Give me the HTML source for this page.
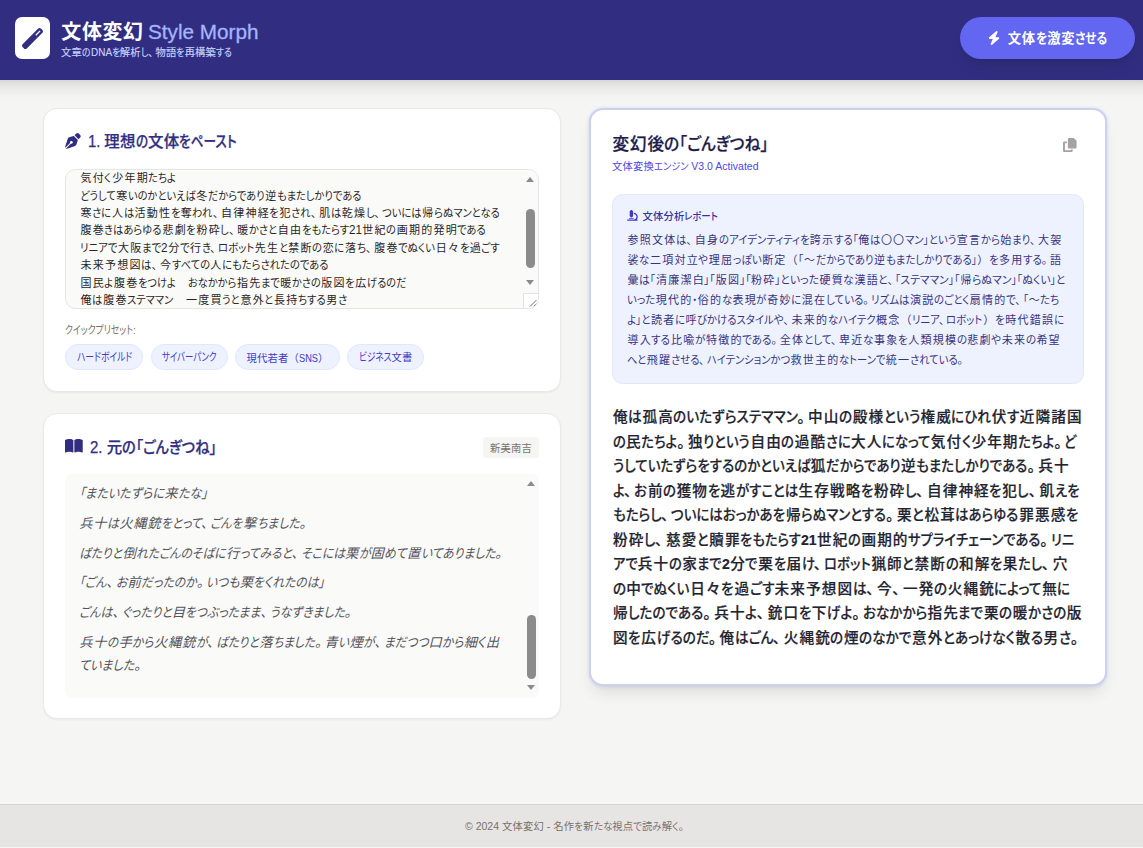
<!DOCTYPE html>
<html lang="ja"><head><meta charset="utf-8"><title>文体変幻 Style Morph</title>
<style>
*{box-sizing:border-box;margin:0;padding:0}
html,body{width:1143px;height:848px;overflow:hidden}
body{position:relative;background:#f5f5f4;font-family:"Liberation Sans","Noto Sans CJK JP",sans-serif;-webkit-font-smoothing:antialiased}
.ln{position:absolute;white-space:nowrap}
.k,.l{display:inline-block;white-space:pre}
.k0,.l0{white-space:pre}
.k>span,.l>span{display:inline-block;transform-origin:0 50%}
.k,.k0,.p,.p0{font-feature-settings:"palt"}
.p,.p0{margin-right:0.2em}

.title{font-size:19.982px;font-weight:700;color:#ffffff;line-height:28px;height:28px;}
.title .j,.title .j0{letter-spacing:0.618px;position:relative;left:0.309px}
.title .l,.title .l0{font-size:20.60px;font-weight:700}
.title2{font-size:18.900px;font-weight:400;color:#a5b4fc;line-height:28px;height:28px;-webkit-text-stroke:0.3px currentColor;}
.title2 .j,.title2 .j0{letter-spacing:2.100px;position:relative;left:1.050px}
.title2 .l,.title2 .l0{font-size:21.00px}
.sub{font-size:10.290px;font-weight:400;color:#c7d2fe;line-height:14px;height:14px;-webkit-text-stroke:0.15px currentColor;}
.sub .j,.sub .j0{letter-spacing:0.210px;position:relative;left:0.105px}
.sub .l,.sub .l0{font-size:10.50px}
.btn{font-size:13.300px;font-weight:700;color:#ffffff;line-height:21px;height:21px;}
.btn .j,.btn .j0{letter-spacing:0.700px;position:relative;left:0.350px}
.btn .l,.btn .l0{font-size:14.00px;font-weight:700}
.h2{font-size:15.435px;font-weight:500;color:#312e81;line-height:24.5px;height:24.5px;-webkit-text-stroke:0.25px currentColor;}
.h2 .j,.h2 .j0{letter-spacing:0.315px;position:relative;left:0.158px}
.h2 .l,.h2 .l0{font-size:15.75px;font-weight:400}
.ta{font-size:11.025px;font-weight:400;color:#292524;line-height:17.43px;height:17.43px;}
.ta .j,.ta .j0{letter-spacing:1.225px;position:relative;left:0.612px}
.ta .l,.ta .l0{font-size:12.25px}
.lab{font-size:10.290px;font-weight:400;color:#78716c;line-height:14px;height:14px;}
.lab .j,.lab .j0{letter-spacing:0.210px;position:relative;left:0.105px}
.lab .l,.lab .l0{font-size:10.50px}
.chip{font-size:10.290px;font-weight:400;color:#4338ca;line-height:14px;height:14px;}
.chip .j,.chip .j0{letter-spacing:0.210px;position:relative;left:0.105px}
.chip .l,.chip .l0{font-size:10.50px}
.badge{font-size:10.290px;font-weight:400;color:#78716c;line-height:14px;height:14px;}
.badge .j,.badge .j0{letter-spacing:0.210px;position:relative;left:0.105px}
.badge .l,.badge .l0{font-size:10.50px}
.it{font-size:13.300px;font-weight:400;color:#54525a;line-height:22.75px;height:22.75px;font-style:italic;}
.it .j,.it .j0{letter-spacing:0.700px;position:relative;left:0.350px}
.it .l,.it .l0{font-size:14.00px}
.h1r{font-size:16.625px;font-weight:500;color:#1e1b4b;line-height:24.5px;height:24.5px;-webkit-text-stroke:0.25px currentColor;}
.h1r .j,.h1r .j0{letter-spacing:0.875px;position:relative;left:0.438px}
.h1r .l,.h1r .l0{font-size:17.50px;font-weight:700}
.subr{font-size:10.290px;font-weight:400;color:#4f46e5;line-height:14px;height:14px;}
.subr .j,.subr .j0{letter-spacing:0.210px;position:relative;left:0.105px}
.subr .l,.subr .l0{font-size:10.50px}
.rt{font-size:10.290px;font-weight:500;color:#3730a3;line-height:14px;height:14px;}
.rt .j,.rt .j0{letter-spacing:0.210px;position:relative;left:0.105px}
.rt .l,.rt .l0{font-size:10.50px;font-weight:700}
.an{font-size:11.025px;font-weight:400;color:#37347f;line-height:19.9px;height:19.9px;}
.an .j,.an .j0{letter-spacing:1.225px;position:relative;left:0.612px}
.an .l,.an .l0{font-size:12.25px}
.res{font-size:14.648px;font-weight:500;color:#1f2430;line-height:24.5px;height:24.5px;-webkit-text-stroke:0.2px currentColor;}
.res .j,.res .j0{letter-spacing:1.102px;position:relative;left:0.551px}
.res .l,.res .l0{font-size:14.80px;font-weight:700}
.ft{font-size:10.290px;font-weight:400;color:#78716c;line-height:14px;height:14px;}
.ft .j,.ft .j0{letter-spacing:0.210px;position:relative;left:0.105px}
.ft .l,.ft .l0{font-size:10.50px}
.hdr{position:absolute;left:-20px;top:0;width:1183px;height:80px;background:#312e81;box-shadow:0 10px 15px -3px rgba(0,0,0,.1),0 4px 6px -4px rgba(0,0,0,.1)}
.logo{position:absolute;left:15px;top:17px;width:35px;height:42px;background:#fff;border-radius:7px}
.logo svg{position:absolute;left:7px;top:10.5px;width:21px;height:21px}
.cta{position:absolute;left:960px;top:17px;width:175px;height:42px;border-radius:21px;background:#6366f1;box-shadow:0 10px 15px -3px rgba(0,0,0,.1),0 4px 6px -4px rgba(0,0,0,.1)}
.cta svg{position:absolute;left:28px;top:14px;width:12.25px;height:14px}
.card{position:absolute;background:#fff;border:1px solid #ebe9e8;border-radius:14px;box-shadow:0 1px 2px 0 rgba(0,0,0,.05)}
#c1{left:43px;top:108px;width:518px;height:284px}
#c2{left:43px;top:413px;width:518px;height:306px}
#c3{left:589px;top:108px;width:518px;height:578px;border:2px solid #ccd2ee;box-shadow:0 0 3px rgba(165,180,252,.45),0 10px 15px -3px rgba(0,0,0,.09),0 4px 6px -4px rgba(0,0,0,.09)}
.ico{position:absolute}
.tarea{position:absolute;left:65px;top:169px;width:474px;height:140px;background:#fafaf9;border:1px solid #e7e5e4;border-radius:10.5px;overflow:hidden}
.sbar{position:absolute;right:0;top:0;width:15px;height:100%;background:#fafafa}
.sbar i{position:absolute;left:3px;width:0;height:0;border-left:4.5px solid transparent;border-right:4.5px solid transparent}
.sbar i.up{border-bottom:5px solid #8b8b8b}
.sbar i.dn{border-top:5px solid #8b8b8b}
.sbar b{position:absolute;left:3px;width:9px;border-radius:4.5px;background:#8b8b8b}
.chipb{position:absolute;top:344px;height:26px;border-radius:13px;background:#eef2ff;border:1px solid #e0e7ff}
.badgeb{position:absolute;left:483px;top:437px;width:56px;height:21px;border-radius:3.5px;background:#f5f5f4}
.orig{position:absolute;left:65px;top:474px;width:474px;height:224px;background:#fafaf9;border-radius:7px;overflow:hidden}
.abox{position:absolute;left:612px;top:194px;width:472px;height:190px;background:#eef2ff;border:1px solid #e0e7ff;border-radius:10.5px}
.ftr{position:absolute;left:0;top:804px;width:1143px;height:43px;background:#e7e5e4;border-top:1px solid #d6d3d1}
.rsz{position:absolute;right:0;bottom:0;width:15px;height:15px}

</style></head><body>
<header>
<div class="hdr"></div>
<div class="logo"><svg viewBox="0 0 512 512"><path fill="#312e81" d="M14.1 463.3c-18.7-18.7-18.7-49.1 0-67.900L395.400 14.100c18.700-18.700 49.100-18.700 67.900 0l34.600 34.600c18.700 18.700 18.700 49.100 0 67.900L116.500 497.900c-18.700 18.700-49.100 18.700-67.900 0L14.100 463.300zM347.600 187.600l105.400-105.400L429.700 59 324.300 164.400l23.300 23.200z"/></svg></div>
<div class="cta"><svg viewBox="0 0 448 512"><path fill="#fff" d="M349.400 44.600c5.900-13.700 1.500-29.700-10.600-38.500s-28.600-8-39.900 1.800l-256 224c-10 8.800-13.600 22.900-8.900 35.300S50.700 288 64 288l111.500 0L98.600 467.400c-5.900 13.700-1.500 29.700 10.600 38.500s28.600 8 39.900-1.800l256-224c10-8.800 13.600-22.900 8.900-35.300s-16.600-20.700-30-20.700l-111.500 0L349.400 44.600z"/></svg></div>
<div class="ln title" style="left:61px;top:18.20px;"><span class="j">文体変幻</span></div>
<div class="ln title2" style="left:147.8px;top:18.30px;"><span class="l" style="width:110.50px"><span style="transform:scaleX(0.9862)">Style Morph</span></span></div>
<div class="ln sub" style="left:61px;top:45.30px;"><span class="j">文章</span><span class="k" style="width:8.54px"><span style="transform:scaleX(0.8606)">の</span></span><span class="l" style="width:21.06px"><span style="transform:scaleX(0.9500)">DNA</span></span><span class="k" style="width:8.18px"><span style="transform:scaleX(0.8606)">を</span></span><span class="j">解析</span><span class="k" style="width:7.48px"><span style="transform:scaleX(0.8606)">し</span></span><span class="p">、</span><span class="j">物語</span><span class="k" style="width:8.18px"><span style="transform:scaleX(0.8606)">を</span></span><span class="j">再構築</span><span class="k" style="width:15.93px"><span style="transform:scaleX(0.8606)">する</span></span></div>
<div class="ln btn" style="left:1007.5px;top:28.00px;"><span class="j">文体</span><span class="k" style="width:11.31px"><span style="transform:scaleX(0.8858)">を</span></span><span class="j">激変</span><span class="k" style="width:32.19px"><span style="transform:scaleX(0.8858)">させる</span></span></div>
</header>
<main>
<section id="style-input">
<div class="card" id="c1"></div>
<svg class="ico" style="left:65px;top:133.2px;width:15.75px;height:15.75px" viewBox="0 0 512 512"><path fill="#312e81" d="M368.4 18.3L312.700 74.100 437.900 199.300l55.700-55.700c21.900-21.900 21.900-57.300 0-79.200L447.600 18.300c-21.900-21.900-57.300-21.900-79.200 0zM288 94.600l-9.200 2.800L134.700 140.600c-19.900 6-35.700 21.200-42.300 41L3.800 445.800c-3.800 11.300-1 23.900 7.300 32.400L164.700 324.700c-3-6.300-4.700-13.300-4.700-20.700c0-26.500 21.500-48 48-48s48 21.500 48 48s-21.500 48-48 48c-7.400 0-14.400-1.700-20.700-4.700L33.700 500.900c8.600 8.300 21.100 11.200 32.400 7.300l264.300-88.600c19.700-6.600 35-22.400 41-42.300l43.200-144.100 2.800-9.200L288 94.600z"/></svg>
<div class="tarea"><div class="sbar"><i class="up" style="top:7px"></i><b style="top:38.5px;height:59.5px"></b><i class="dn" style="top:110px"></i></div><svg class="rsz" viewBox="0 0 15 15"><rect x="0" y="0" width="15" height="15" fill="#fff"/><path d="M0.5 15V0.5H15" fill="none" stroke="#e0e0e0" stroke-width="1"/><path d="M7 13.5L13.5 7M10.5 13.5L13.5 10.5" stroke="#6b6b6b" stroke-width="1" fill="none"/></svg></div>
<div class="chipb" style="left:65px;width:78px"></div>
<div class="chipb" style="left:150.5px;width:77.5px"></div>
<div class="chipb" style="left:235px;width:105px"></div>
<div class="chipb" style="left:347px;width:77px"></div>
<div class="ln h2" style="left:87.5px;top:130.35px;"><span class="l" style="width:16.64px"><span style="transform:scaleX(0.9500)">1. </span></span><span class="j">理想</span><span class="k" style="width:12.24px"><span style="transform:scaleX(0.8226)">の</span></span><span class="j">文体</span><span class="k" style="width:57.66px"><span style="transform:scaleX(0.8226)">をペースト</span></span></div>
<div class="ln ta" style="left:80px;top:170.09px;"><span class="j">気付</span><span class="k" style="width:7.08px"><span style="transform:scaleX(0.9348)">く</span></span><span class="j">少年期</span><span class="k" style="width:27.90px"><span style="transform:scaleX(0.9348)">たちよ</span></span></div>
<div class="ln ta" style="left:80px;top:187.52px;"><span class="k" style="width:35.75px"><span style="transform:scaleX(0.9289)">どうして</span></span><span class="j">寒</span><span class="k" style="width:67.66px"><span style="transform:scaleX(0.9289)">いのかといえば</span></span><span class="j">冬</span><span class="k" style="width:56.65px"><span style="transform:scaleX(0.9289)">だからであり</span></span><span class="j">逆</span><span class="k" style="width:84.40px"><span style="transform:scaleX(0.9289)">もまたしかりである</span></span></div>
<div class="ln ta" style="left:80px;top:204.95px;"><span class="j">寒</span><span class="k" style="width:19.13px"><span style="transform:scaleX(0.9362)">さに</span></span><span class="j">人</span><span class="k" style="width:10.33px"><span style="transform:scaleX(0.9362)">は</span></span><span class="j">活動性</span><span class="k" style="width:9.52px"><span style="transform:scaleX(0.9362)">を</span></span><span class="j">奪</span><span class="k" style="width:20.30px"><span style="transform:scaleX(0.9362)">われ</span></span><span class="p">、</span><span class="j">自律神経</span><span class="k" style="width:9.52px"><span style="transform:scaleX(0.9362)">を</span></span><span class="j">犯</span><span class="k" style="width:19.62px"><span style="transform:scaleX(0.9362)">され</span></span><span class="p">、</span><span class="j">肌</span><span class="k" style="width:10.33px"><span style="transform:scaleX(0.9362)">は</span></span><span class="j">乾燥</span><span class="k" style="width:8.72px"><span style="transform:scaleX(0.9362)">し</span></span><span class="p">、</span><span class="k" style="width:39.67px"><span style="transform:scaleX(0.9362)">ついには</span></span><span class="j">帰</span><span class="k" style="width:65.80px"><span style="transform:scaleX(0.9362)">らぬマンとなる</span></span></div>
<div class="ln ta" style="left:80px;top:222.38px;"><span class="j">腹巻</span><span class="k" style="width:57.36px"><span style="transform:scaleX(0.9344)">きはあらゆる</span></span><span class="j">悲劇</span><span class="k" style="width:9.50px"><span style="transform:scaleX(0.9344)">を</span></span><span class="j">粉砕</span><span class="k" style="width:8.70px"><span style="transform:scaleX(0.9344)">し</span></span><span class="p">、</span><span class="j">暖</span><span class="k" style="width:28.21px"><span style="transform:scaleX(0.9344)">かさと</span></span><span class="j">自由</span><span class="k" style="width:47.10px"><span style="transform:scaleX(0.9344)">をもたらす</span></span><span class="l" style="width:12.96px"><span style="transform:scaleX(0.9500)">21</span></span><span class="j">世紀</span><span class="k" style="width:9.93px"><span style="transform:scaleX(0.9344)">の</span></span><span class="j">画期的発明</span><span class="k" style="width:28.63px"><span style="transform:scaleX(0.9344)">である</span></span></div>
<div class="ln ta" style="left:80px;top:239.81px;"><span class="k" style="width:37.40px"><span style="transform:scaleX(0.9439)">リニアで</span></span><span class="j">大阪</span><span class="k" style="width:19.20px"><span style="transform:scaleX(0.9439)">まで</span></span><span class="l" style="width:6.49px"><span style="transform:scaleX(0.9500)">2</span></span><span class="j">分</span><span class="k" style="width:9.62px"><span style="transform:scaleX(0.9439)">で</span></span><span class="j">行</span><span class="k" style="width:8.36px"><span style="transform:scaleX(0.9439)">き</span></span><span class="p">、</span><span class="k" style="width:36.37px"><span style="transform:scaleX(0.9439)">ロボット</span></span><span class="j">先生</span><span class="k" style="width:9.17px"><span style="transform:scaleX(0.9439)">と</span></span><span class="j">禁断</span><span class="k" style="width:10.03px"><span style="transform:scaleX(0.9439)">の</span></span><span class="j">恋</span><span class="k" style="width:10.01px"><span style="transform:scaleX(0.9439)">に</span></span><span class="j">落</span><span class="k" style="width:9.17px"><span style="transform:scaleX(0.9439)">ち</span></span><span class="p">、</span><span class="j">腹巻</span><span class="k" style="width:36.97px"><span style="transform:scaleX(0.9439)">でぬくい</span></span><span class="j">日々</span><span class="k" style="width:9.60px"><span style="transform:scaleX(0.9439)">を</span></span><span class="j">過</span><span class="k" style="width:18.69px"><span style="transform:scaleX(0.9439)">ごす</span></span></div>
<div class="ln ta" style="left:80px;top:257.24px;"><span class="j">未来予想図</span><span class="k" style="width:10.34px"><span style="transform:scaleX(0.9370)">は</span></span><span class="p">、</span><span class="j">今</span><span class="k" style="width:38.18px"><span style="transform:scaleX(0.9370)">すべての</span></span><span class="j">人</span><span class="k" style="width:106.54px"><span style="transform:scaleX(0.9370)">にもたらされたのである</span></span></div>
<div class="ln ta" style="left:80px;top:274.67px;"><span class="j">国民</span><span class="k" style="width:8.91px"><span style="transform:scaleX(0.9256)">よ</span></span><span class="j">腹巻</span><span class="k" style="width:37.85px"><span style="transform:scaleX(0.9256)">をつけよ</span></span><span class="j">　</span><span class="k" style="width:48.38px"><span style="transform:scaleX(0.9256)">おなかから</span></span><span class="j">指先</span><span class="k" style="width:18.83px"><span style="transform:scaleX(0.9256)">まで</span></span><span class="j">暖</span><span class="k" style="width:28.79px"><span style="transform:scaleX(0.9256)">かさの</span></span><span class="j">版図</span><span class="k" style="width:9.42px"><span style="transform:scaleX(0.9256)">を</span></span><span class="j">広</span><span class="k" style="width:39.44px"><span style="transform:scaleX(0.9256)">げるのだ</span></span></div>
<div class="ln ta" style="left:80px;top:292.10px;"><span class="j">俺</span><span class="k" style="width:10.32px"><span style="transform:scaleX(0.9351)">は</span></span><span class="j">腹巻</span><span class="k" style="width:46.20px"><span style="transform:scaleX(0.9351)">ステママン</span></span><span class="j">　一度買</span><span class="k" style="width:17.64px"><span style="transform:scaleX(0.9351)">うと</span></span><span class="j">意外</span><span class="k" style="width:9.09px"><span style="transform:scaleX(0.9351)">と</span></span><span class="j">長持</span><span class="k" style="width:27.65px"><span style="transform:scaleX(0.9351)">ちする</span></span><span class="j">男</span><span class="k" style="width:9.19px"><span style="transform:scaleX(0.9351)">さ</span></span></div>
<div class="ln lab" style="left:65px;top:323.20px;"><span class="k" style="width:68.02px"><span style="transform:scale(0.8580,1.12)">クイックプリセット</span></span><span class="l" style="width:2.78px"><span style="transform:scaleX(0.9500)">:</span></span></div>
<div class="ln chip" style="left:76.5px;top:350.60px;"><span class="k" style="width:55.30px"><span style="transform:scale(0.8522,1.12)">ハードボイルド</span></span></div>
<div class="ln chip" style="left:162px;top:350.60px;"><span class="k" style="width:54.50px"><span style="transform:scale(0.8151,1.12)">サイバーパンク</span></span></div>
<div class="ln chip" style="left:246.5px;top:350.60px;"><span class="j">現代若者（</span><span class="l" style="width:19.03px"><span style="transform:scaleX(0.8813)">SNS</span></span><span class="j">）</span></div>
<div class="ln chip" style="left:359px;top:350.60px;"><span class="k" style="width:32.52px"><span style="transform:scale(0.8425,1.12)">ビジネス</span></span><span class="j">文書</span></div>
</section>
<section id="source-text">
<div class="card" id="c2"></div>
<svg class="ico" style="left:65px;top:438px;width:17.72px;height:15.75px" viewBox="0 0 576 512"><path fill="#312e81" d="M249.600 471.500c10.800 3.800 22.400-4.100 22.400-15.500l0-377.400c0-4.200-1.600-8.400-5-11C247.400 52 202.400 32 144 32C93.500 32 46.300 45.300 18.100 56.100C6.800 60.500 0 71.700 0 83.800L0 454.100c0 11.900 12.800 20.200 24.100 16.500C55.600 460.100 105.500 448 144 448c33.900 0 79 14 105.600 23.500zm76.800 0C353 462 398.100 448 432 448c38.500 0 88.400 12.100 119.900 22.600c11.300 3.800 24.100-4.600 24.100-16.500l0-370.300c0-12.100-6.800-23.300-18.100-27.600C529.700 45.300 482.500 32 432 32c-58.400 0-103.400 20-123 35.600c-3.300 2.600-5 6.800-5 11L304 456c0 11.400 11.700 19.300 22.400 15.500z"/></svg>
<div class="badgeb"></div>
<div class="orig"><div class="sbar"><i class="up" style="top:7px"></i><b style="top:140.6px;height:64.3px"></b><i class="dn" style="top:211px"></i></div></div>
<div class="ln h2" style="left:90px;top:436.15px;"><span class="l" style="width:16.64px"><span style="transform:scaleX(0.9500)">2. </span></span><span class="j">元</span><span class="k" style="width:94.61px"><span style="transform:scaleX(0.9264)">の「ごんぎつね」</span></span></div>
<div class="ln badge" style="left:490px;top:441.60px;"><span class="j">新美南吉</span></div>
<div class="ln it" style="left:79px;top:483.12px;"><span class="k" style="width:85.03px"><span style="transform:scaleX(0.9100)">「またいたずらに</span></span><span class="j">来</span><span class="k" style="width:29.47px"><span style="transform:scaleX(0.9100)">たな」</span></span></div>
<div class="ln it" style="left:79px;top:512.83px;"><span class="j">兵十</span><span class="k" style="width:11.84px"><span style="transform:scaleX(0.8905)">は</span></span><span class="j">火縄銃</span><span class="k" style="width:40.15px"><span style="transform:scaleX(0.8905)">をとって</span></span><span class="p">、</span><span class="k" style="width:32.42px"><span style="transform:scaleX(0.8905)">ごんを</span></span><span class="j">撃</span><span class="k" style="width:42.67px"><span style="transform:scaleX(0.8905)">ちました</span></span><span class="p">。</span></div>
<div class="ln it" style="left:79px;top:542.62px;"><span class="k" style="width:43.24px"><span style="transform:scaleX(0.8853)">ばたりと</span></span><span class="j">倒</span><span class="k" style="width:89.54px"><span style="transform:scaleX(0.8853)">れたごんのそばに</span></span><span class="j">行</span><span class="k" style="width:51.58px"><span style="transform:scaleX(0.8853)">ってみると</span></span><span class="p">、</span><span class="k" style="width:43.93px"><span style="transform:scaleX(0.8853)">そこには</span></span><span class="j">栗</span><span class="k" style="width:11.54px"><span style="transform:scaleX(0.8853)">が</span></span><span class="j">固</span><span class="k" style="width:22.56px"><span style="transform:scaleX(0.8853)">めて</span></span><span class="j">置</span><span class="k" style="width:74.49px"><span style="transform:scaleX(0.8853)">いてありました</span></span><span class="p">。</span></div>
<div class="ln it" style="left:79px;top:572.43px;"><span class="k" style="width:27.45px"><span style="transform:scaleX(0.8919)">「ごん</span></span><span class="p">、</span><span class="k" style="width:11.39px"><span style="transform:scaleX(0.8919)">お</span></span><span class="j">前</span><span class="k" style="width:55.47px"><span style="transform:scaleX(0.8919)">だったのか</span></span><span class="p">。</span><span class="k" style="width:33.56px"><span style="transform:scaleX(0.8919)">いつも</span></span><span class="j">栗</span><span class="k" style="width:71.51px"><span style="transform:scaleX(0.8919)">をくれたのは」</span></span></div>
<div class="ln it" style="left:79px;top:602.23px;"><span class="k" style="width:33.25px"><span style="transform:scaleX(0.8882)">ごんは</span></span><span class="p">、</span><span class="k" style="width:49.85px"><span style="transform:scaleX(0.8882)">ぐったりと</span></span><span class="j">目</span><span class="k" style="width:74.90px"><span style="transform:scaleX(0.8882)">をつぶったまま</span></span><span class="p">、</span><span class="k" style="width:74.77px"><span style="transform:scaleX(0.8882)">うなずきました</span></span><span class="p">。</span></div>
<div class="ln it" style="left:79px;top:632.03px;"><span class="j">兵十</span><span class="k" style="width:11.24px"><span style="transform:scaleX(0.8760)">の</span></span><span class="j">手</span><span class="k" style="width:21.38px"><span style="transform:scaleX(0.8760)">から</span></span><span class="j">火縄銃</span><span class="k" style="width:11.18px"><span style="transform:scaleX(0.8760)">が</span></span><span class="p">、</span><span class="k" style="width:42.79px"><span style="transform:scaleX(0.8760)">ばたりと</span></span><span class="j">落</span><span class="k" style="width:41.98px"><span style="transform:scaleX(0.8760)">ちました</span></span><span class="p">。</span><span class="j">青</span><span class="k" style="width:11.00px"><span style="transform:scaleX(0.8760)">い</span></span><span class="j">煙</span><span class="k" style="width:11.18px"><span style="transform:scaleX(0.8760)">が</span></span><span class="p">、</span><span class="k" style="width:44.41px"><span style="transform:scaleX(0.8760)">まだつつ</span></span><span class="j">口</span><span class="k" style="width:21.38px"><span style="transform:scaleX(0.8760)">から</span></span><span class="j">細</span><span class="k" style="width:8.01px"><span style="transform:scaleX(0.8760)">く</span></span><span class="j">出</span></div>
<div class="ln it" style="left:79px;top:654.83px;"><span class="k" style="width:55.20px"><span style="transform:scaleX(0.9054)">ていました</span></span><span class="p">。</span></div>
</section>
<section id="result">
<div class="card" id="c3"></div>
<svg class="ico" style="left:1063px;top:138px;width:13.6px;height:14px" viewBox="0 0 448 512" preserveAspectRatio="none"><path fill="#a8a29e" d="M208 0L332.100 0c12.700 0 24.900 5.100 33.900 14.100l67.900 67.900c9 9 14.100 21.200 14.100 33.900L448 336c0 26.500-21.500 48-48 48l-192 0c-26.500 0-48-21.500-48-48l0-288c0-26.500 21.500-48 48-48zM48 128l80 0 0 64-64 0 0 256 192 0 0-32 64 0 0 48c0 26.500-21.500 48-48 48L48 512c-26.500 0-48-21.500-48-48L0 176c0-26.500 21.500-48 48-48z"/></svg>
<div class="abox"></div>
<svg class="ico" style="left:627.3px;top:210.2px;width:10.8px;height:10.8px" viewBox="0 0 512 512"><path fill="#4338ca" d="M160 32c0-17.700 14.300-32 32-32l32 0c17.700 0 32 14.300 32 32c17.700 0 32 14.300 32 32l0 224c0 17.700-14.300 32-32 32c0 17.700-14.300 32-32 32l-32 0c-17.700 0-32-14.300-32-32c-17.700 0-32-14.300-32-32l0-224c0-17.700 14.300-32 32-32zM32 448l288 0c70.700 0 128-57.300 128-128s-57.300-128-128-128l0-64c106 0 192 86 192 192c0 49.200-18.500 94-48.900 128l16.900 0c17.700 0 32 14.300 32 32s-14.300 32-32 32l-160 0L32 512c-17.700 0-32-14.300-32-32s14.300-32 32-32zm80-64l192 0c8.800 0 16 7.200 16 16s-7.200 16-16 16l-192 0c-8.800 0-16-7.200-16-16s7.200-16 16-16z"/></svg>
<div class="ln h1r" style="left:612px;top:132.85px;"><span class="j">変幻後</span><span class="k" style="width:104.33px"><span style="transform:scaleX(0.9486)">の「ごんぎつね」</span></span></div>
<div class="ln subr" style="left:612px;top:159.40px;"><span class="j">文体変換</span><span class="k" style="width:34.48px"><span style="transform:scaleX(0.9030)">エンジン</span></span><span class="l" style="width:70.05px"><span style="transform:scaleX(1.0000)"> V3.0 Activated</span></span></div>
<div class="ln rt" style="left:642.5px;top:210.20px;"><span class="j">文体分析</span><span class="k" style="width:34.03px"><span style="transform:scaleX(0.9194)">レポート</span></span></div>
<div class="ln an" style="left:627px;top:231.15px;"><span class="j">参照文体</span><span class="k" style="width:10.41px"><span style="transform:scaleX(0.9441)">は</span></span><span class="p">、</span><span class="j">自身</span><span class="k" style="width:90.61px"><span style="transform:scaleX(0.9441)">のアイデンティティを</span></span><span class="j">誇示</span><span class="k" style="width:23.94px"><span style="transform:scaleX(0.9441)">する「</span></span><span class="j">俺</span><span class="k" style="width:10.41px"><span style="transform:scaleX(0.9441)">は</span></span><span class="j">〇〇</span><span class="k" style="width:51.36px"><span style="transform:scaleX(0.9441)">マン」という</span></span><span class="j">宣言</span><span class="k" style="width:19.09px"><span style="transform:scaleX(0.9441)">から</span></span><span class="j">始</span><span class="k" style="width:17.83px"><span style="transform:scaleX(0.9441)">まり</span></span><span class="p">、</span><span class="j">大袈</span></div>
<div class="ln an" style="left:627px;top:251.05px;"><span class="j">裟</span><span class="k" style="width:10.22px"><span style="transform:scaleX(0.9442)">な</span></span><span class="j">二項対立</span><span class="k" style="width:9.77px"><span style="transform:scaleX(0.9442)">や</span></span><span class="j">理屈</span><span class="k" style="width:28.84px"><span style="transform:scaleX(0.9442)">っぽい</span></span><span class="j">断定（</span><span class="k" style="width:5.21px"><span style="transform:scaleX(0.9442)">「</span></span><span class="j">～</span><span class="k" style="width:57.58px"><span style="transform:scaleX(0.9442)">だからであり</span></span><span class="j">逆</span><span class="k" style="width:91.00px"><span style="transform:scaleX(0.9442)">もまたしかりである」</span></span><span class="j">）</span><span class="k" style="width:9.60px"><span style="transform:scaleX(0.9442)">を</span></span><span class="j">多用</span><span class="k" style="width:18.74px"><span style="transform:scaleX(0.9442)">する</span></span><span class="p">。</span><span class="j">語</span></div>
<div class="ln an" style="left:627px;top:270.95px;"><span class="j">彙</span><span class="k" style="width:16.19px"><span style="transform:scaleX(0.9791)">は「</span></span><span class="j">清廉潔白</span><span class="k" style="width:10.79px"><span style="transform:scaleX(0.9791)">」「</span></span><span class="j">版図</span><span class="k" style="width:10.79px"><span style="transform:scaleX(0.9791)">」「</span></span><span class="j">粉砕</span><span class="k" style="width:43.97px"><span style="transform:scaleX(0.9791)">」といった</span></span><span class="j">硬質</span><span class="k" style="width:10.60px"><span style="transform:scaleX(0.9791)">な</span></span><span class="j">漢語</span><span class="k" style="width:9.07px"><span style="transform:scaleX(0.9791)">と</span></span><span class="p">、</span><span class="k" style="width:64.54px"><span style="transform:scaleX(0.9791)">「ステママン」「</span></span><span class="j">帰</span><span class="k" style="width:93.43px"><span style="transform:scaleX(0.9791)">らぬマン」「ぬくい」と</span></span></div>
<div class="ln an" style="left:627px;top:290.85px;"><span class="k" style="width:28.19px"><span style="transform:scaleX(0.9494)">いった</span></span><span class="j">現代的</span><span class="k" style="width:5.24px"><span style="transform:scaleX(0.9494)">・</span></span><span class="j">俗的</span><span class="k" style="width:10.28px"><span style="transform:scaleX(0.9494)">な</span></span><span class="j">表現</span><span class="k" style="width:10.25px"><span style="transform:scaleX(0.9494)">が</span></span><span class="j">奇妙</span><span class="k" style="width:10.07px"><span style="transform:scaleX(0.9494)">に</span></span><span class="j">混在</span><span class="k" style="width:37.40px"><span style="transform:scaleX(0.9494)">している</span></span><span class="p">。</span><span class="k" style="width:38.51px"><span style="transform:scaleX(0.9494)">リズムは</span></span><span class="j">演説</span><span class="k" style="width:35.38px"><span style="transform:scaleX(0.9494)">のごとく</span></span><span class="j">扇情的</span><span class="k" style="width:9.26px"><span style="transform:scaleX(0.9494)">で</span></span><span class="p">、</span><span class="k" style="width:5.24px"><span style="transform:scaleX(0.9494)">「</span></span><span class="j">～</span><span class="k" style="width:19.21px"><span style="transform:scaleX(0.9494)">たち</span></span></div>
<div class="ln an" style="left:627px;top:310.75px;"><span class="k" style="width:23.39px"><span style="transform:scaleX(0.9419)">よ」と</span></span><span class="j">読者</span><span class="k" style="width:9.99px"><span style="transform:scaleX(0.9419)">に</span></span><span class="j">呼</span><span class="k" style="width:86.17px"><span style="transform:scaleX(0.9419)">びかけるスタイルや</span></span><span class="p">、</span><span class="j">未来的</span><span class="k" style="width:47.62px"><span style="transform:scaleX(0.9419)">なハイテク</span></span><span class="j">概念（</span><span class="k" style="width:26.70px"><span style="transform:scaleX(0.9419)">リニア</span></span><span class="p">、</span><span class="k" style="width:36.29px"><span style="transform:scaleX(0.9419)">ロボット</span></span><span class="j">）</span><span class="k" style="width:9.58px"><span style="transform:scaleX(0.9419)">を</span></span><span class="j">時代錯誤</span><span class="k" style="width:9.99px"><span style="transform:scaleX(0.9419)">に</span></span></div>
<div class="ln an" style="left:627px;top:330.65px;"><span class="j">導入</span><span class="k" style="width:19.03px"><span style="transform:scaleX(0.9588)">する</span></span><span class="j">比喩</span><span class="k" style="width:10.35px"><span style="transform:scaleX(0.9588)">が</span></span><span class="j">特徴的</span><span class="k" style="width:29.38px"><span style="transform:scaleX(0.9588)">である</span></span><span class="p">。</span><span class="j">全体</span><span class="k" style="width:27.10px"><span style="transform:scaleX(0.9588)">として</span></span><span class="p">、</span><span class="j">卑近</span><span class="k" style="width:10.38px"><span style="transform:scaleX(0.9588)">な</span></span><span class="j">事象</span><span class="k" style="width:9.75px"><span style="transform:scaleX(0.9588)">を</span></span><span class="j">人類規模</span><span class="k" style="width:10.19px"><span style="transform:scaleX(0.9588)">の</span></span><span class="j">悲劇</span><span class="k" style="width:9.92px"><span style="transform:scaleX(0.9588)">や</span></span><span class="j">未来</span><span class="k" style="width:10.19px"><span style="transform:scaleX(0.9588)">の</span></span><span class="j">希望</span></div>
<div class="ln an" style="left:627px;top:350.55px;"><span class="k" style="width:19.06px"><span style="transform:scaleX(0.9370)">へと</span></span><span class="j">飛躍</span><span class="k" style="width:28.39px"><span style="transform:scaleX(0.9370)">させる</span></span><span class="p">、</span><span class="k" style="width:83.21px"><span style="transform:scaleX(0.9370)">ハイテンションかつ</span></span><span class="j">救世主的</span><span class="k" style="width:46.44px"><span style="transform:scaleX(0.9370)">なトーンで</span></span><span class="j">統一</span><span class="k" style="width:47.72px"><span style="transform:scaleX(0.9370)">されている</span></span><span class="p">。</span></div>
<div class="ln res" style="left:612.5px;top:405.05px;"><span class="j">俺</span><span class="k" style="width:13.67px"><span style="transform:scaleX(0.9339)">は</span></span><span class="j">孤高</span><span class="k" style="width:123.97px"><span style="transform:scaleX(0.9339)">のいたずらステママン</span></span><span class="p">。</span><span class="j">中山</span><span class="k" style="width:13.18px"><span style="transform:scaleX(0.9339)">の</span></span><span class="j">殿様</span><span class="k" style="width:36.28px"><span style="transform:scaleX(0.9339)">という</span></span><span class="j">権威</span><span class="k" style="width:39.73px"><span style="transform:scaleX(0.9339)">にひれ</span></span><span class="j">伏</span><span class="k" style="width:12.36px"><span style="transform:scaleX(0.9339)">す</span></span><span class="j">近隣諸国</span></div>
<div class="ln res" style="left:612.5px;top:429.55px;"><span class="k" style="width:12.89px"><span style="transform:scaleX(0.9139)">の</span></span><span class="j">民</span><span class="k" style="width:36.21px"><span style="transform:scaleX(0.9139)">たちよ</span></span><span class="p">。</span><span class="j">独</span><span class="k" style="width:46.62px"><span style="transform:scaleX(0.9139)">りという</span></span><span class="j">自由</span><span class="k" style="width:12.89px"><span style="transform:scaleX(0.9139)">の</span></span><span class="j">過酷</span><span class="k" style="width:24.79px"><span style="transform:scaleX(0.9139)">さに</span></span><span class="j">大人</span><span class="k" style="width:48.28px"><span style="transform:scaleX(0.9139)">になって</span></span><span class="j">気付</span><span class="k" style="width:9.18px"><span style="transform:scaleX(0.9139)">く</span></span><span class="j">少年期</span><span class="k" style="width:36.21px"><span style="transform:scaleX(0.9139)">たちよ</span></span><span class="p">。</span><span class="k" style="width:12.39px"><span style="transform:scaleX(0.9139)">ど</span></span></div>
<div class="ln res" style="left:612.5px;top:454.05px;"><span class="k" style="width:197.58px"><span style="transform:scaleX(0.9224)">うしていたずらをするのかといえば</span></span><span class="j">狐</span><span class="k" style="width:74.67px"><span style="transform:scaleX(0.9224)">だからであり</span></span><span class="j">逆</span><span class="k" style="width:111.27px"><span style="transform:scaleX(0.9224)">もまたしかりである</span></span><span class="p">。</span><span class="j">兵十</span></div>
<div class="ln res" style="left:612.5px;top:478.55px;"><span class="k" style="width:11.76px"><span style="transform:scaleX(0.9200)">よ</span></span><span class="p">、</span><span class="k" style="width:12.91px"><span style="transform:scaleX(0.9200)">お</span></span><span class="j">前</span><span class="k" style="width:12.98px"><span style="transform:scaleX(0.9200)">の</span></span><span class="j">獲物</span><span class="k" style="width:12.42px"><span style="transform:scaleX(0.9200)">を</span></span><span class="j">逃</span><span class="k" style="width:62.30px"><span style="transform:scaleX(0.9200)">がすことは</span></span><span class="j">生存戦略</span><span class="k" style="width:12.42px"><span style="transform:scaleX(0.9200)">を</span></span><span class="j">粉砕</span><span class="k" style="width:11.37px"><span style="transform:scaleX(0.9200)">し</span></span><span class="p">、</span><span class="j">自律神経</span><span class="k" style="width:12.42px"><span style="transform:scaleX(0.9200)">を</span></span><span class="j">犯</span><span class="k" style="width:11.37px"><span style="transform:scaleX(0.9200)">し</span></span><span class="p">、</span><span class="j">飢</span><span class="k" style="width:24.60px"><span style="transform:scaleX(0.9200)">えを</span></span></div>
<div class="ln res" style="left:612.5px;top:503.05px;"><span class="k" style="width:48.69px"><span style="transform:scaleX(0.9217)">もたらし</span></span><span class="p">、</span><span class="k" style="width:114.09px"><span style="transform:scaleX(0.9217)">ついにはおっかあを</span></span><span class="j">帰</span><span class="k" style="width:84.95px"><span style="transform:scaleX(0.9217)">らぬマンとする</span></span><span class="p">。</span><span class="j">栗</span><span class="k" style="width:11.88px"><span style="transform:scaleX(0.9217)">と</span></span><span class="j">松茸</span><span class="k" style="width:63.34px"><span style="transform:scaleX(0.9217)">はあらゆる</span></span><span class="j">罪悪感</span><span class="k" style="width:12.44px"><span style="transform:scaleX(0.9217)">を</span></span></div>
<div class="ln res" style="left:612.5px;top:527.55px;"><span class="j">粉砕</span><span class="k" style="width:11.24px"><span style="transform:scaleX(0.9091)">し</span></span><span class="p">、</span><span class="j">慈愛</span><span class="k" style="width:11.72px"><span style="transform:scaleX(0.9091)">と</span></span><span class="j">贖罪</span><span class="k" style="width:60.83px"><span style="transform:scaleX(0.9091)">をもたらす</span></span><span class="l" style="width:15.65px"><span style="transform:scaleX(0.9500)">21</span></span><span class="j">世紀</span><span class="k" style="width:12.83px"><span style="transform:scaleX(0.9091)">の</span></span><span class="j">画期的</span><span class="k" style="width:132.23px"><span style="transform:scaleX(0.9091)">サプライチェーンである</span></span><span class="p">。</span><span class="k" style="width:23.17px"><span style="transform:scaleX(0.9091)">リニ</span></span></div>
<div class="ln res" style="left:612.5px;top:552.05px;"><span class="k" style="width:24.76px"><span style="transform:scaleX(0.9124)">アで</span></span><span class="j">兵十</span><span class="k" style="width:12.87px"><span style="transform:scaleX(0.9124)">の</span></span><span class="j">家</span><span class="k" style="width:24.64px"><span style="transform:scaleX(0.9124)">まで</span></span><span class="l" style="width:7.82px"><span style="transform:scaleX(0.9500)">2</span></span><span class="j">分</span><span class="k" style="width:12.33px"><span style="transform:scaleX(0.9124)">で</span></span><span class="j">栗</span><span class="k" style="width:12.32px"><span style="transform:scaleX(0.9124)">を</span></span><span class="j">届</span><span class="k" style="width:12.36px"><span style="transform:scaleX(0.9124)">け</span></span><span class="p">、</span><span class="k" style="width:46.66px"><span style="transform:scaleX(0.9124)">ロボット</span></span><span class="j">猟師</span><span class="k" style="width:11.76px"><span style="transform:scaleX(0.9124)">と</span></span><span class="j">禁断</span><span class="k" style="width:12.87px"><span style="transform:scaleX(0.9124)">の</span></span><span class="j">和解</span><span class="k" style="width:12.32px"><span style="transform:scaleX(0.9124)">を</span></span><span class="j">果</span><span class="k" style="width:24.01px"><span style="transform:scaleX(0.9124)">たし</span></span><span class="p">、</span><span class="j">穴</span></div>
<div class="ln res" style="left:612.5px;top:576.55px;"><span class="k" style="width:13.15px"><span style="transform:scaleX(0.9318)">の</span></span><span class="j">中</span><span class="k" style="width:48.45px"><span style="transform:scaleX(0.9318)">でぬくい</span></span><span class="j">日々</span><span class="k" style="width:12.58px"><span style="transform:scaleX(0.9318)">を</span></span><span class="j">過</span><span class="k" style="width:24.47px"><span style="transform:scaleX(0.9318)">ごす</span></span><span class="j">未来予想図</span><span class="k" style="width:13.64px"><span style="transform:scaleX(0.9318)">は</span></span><span class="p">、</span><span class="j">今</span><span class="p">、</span><span class="j">一発</span><span class="k" style="width:13.15px"><span style="transform:scaleX(0.9318)">の</span></span><span class="j">火縄銃</span><span class="k" style="width:47.33px"><span style="transform:scaleX(0.9318)">によって</span></span><span class="j">無</span><span class="k" style="width:13.13px"><span style="transform:scaleX(0.9318)">に</span></span></div>
<div class="ln res" style="left:612.5px;top:601.05px;"><span class="j">帰</span><span class="k" style="width:75.19px"><span style="transform:scaleX(0.9274)">したのである</span></span><span class="p">。</span><span class="j">兵十</span><span class="k" style="width:11.85px"><span style="transform:scaleX(0.9274)">よ</span></span><span class="p">、</span><span class="j">銃口</span><span class="k" style="width:12.52px"><span style="transform:scaleX(0.9274)">を</span></span><span class="j">下</span><span class="k" style="width:25.35px"><span style="transform:scaleX(0.9274)">げよ</span></span><span class="p">。</span><span class="k" style="width:64.36px"><span style="transform:scaleX(0.9274)">おなかから</span></span><span class="j">指先</span><span class="k" style="width:25.04px"><span style="transform:scaleX(0.9274)">まで</span></span><span class="j">栗</span><span class="k" style="width:13.09px"><span style="transform:scaleX(0.9274)">の</span></span><span class="j">暖</span><span class="k" style="width:38.30px"><span style="transform:scaleX(0.9274)">かさの</span></span><span class="j">版</span></div>
<div class="ln res" style="left:612.5px;top:625.55px;"><span class="j">図</span><span class="k" style="width:12.56px"><span style="transform:scaleX(0.9302)">を</span></span><span class="j">広</span><span class="k" style="width:52.22px"><span style="transform:scaleX(0.9302)">げるのだ</span></span><span class="p">。</span><span class="j">俺</span><span class="k" style="width:38.30px"><span style="transform:scaleX(0.9302)">はごん</span></span><span class="p">、</span><span class="j">火縄銃</span><span class="k" style="width:13.13px"><span style="transform:scaleX(0.9302)">の</span></span><span class="j">煙</span><span class="k" style="width:52.22px"><span style="transform:scaleX(0.9302)">のなかで</span></span><span class="j">意外</span><span class="k" style="width:72.02px"><span style="transform:scaleX(0.9302)">とあっけなく</span></span><span class="j">散</span><span class="k" style="width:12.19px"><span style="transform:scaleX(0.9302)">る</span></span><span class="j">男</span><span class="k" style="width:12.12px"><span style="transform:scaleX(0.9302)">さ</span></span><span class="p">。</span></div>
</section>
</main>
<footer>
<div class="ftr"></div>
<div class="ln ft" style="left:465px;top:819.00px;"><span class="l" style="width:36.94px"><span style="transform:scaleX(1.0000)">© 2024 </span></span><span class="j">文体変幻</span><span class="l" style="width:9.34px"><span style="transform:scaleX(1.0000)"> - </span></span><span class="j">名作</span><span class="k" style="width:8.83px"><span style="transform:scaleX(0.9291)">を</span></span><span class="j">新</span><span class="k" style="width:18.50px"><span style="transform:scaleX(0.9291)">たな</span></span><span class="j">視点</span><span class="k" style="width:8.83px"><span style="transform:scaleX(0.9291)">で</span></span><span class="j">読</span><span class="k" style="width:9.35px"><span style="transform:scaleX(0.9291)">み</span></span><span class="j">解</span><span class="k" style="width:6.56px"><span style="transform:scaleX(0.9291)">く</span></span><span class="p">。</span></div>
</footer>
</body></html>
